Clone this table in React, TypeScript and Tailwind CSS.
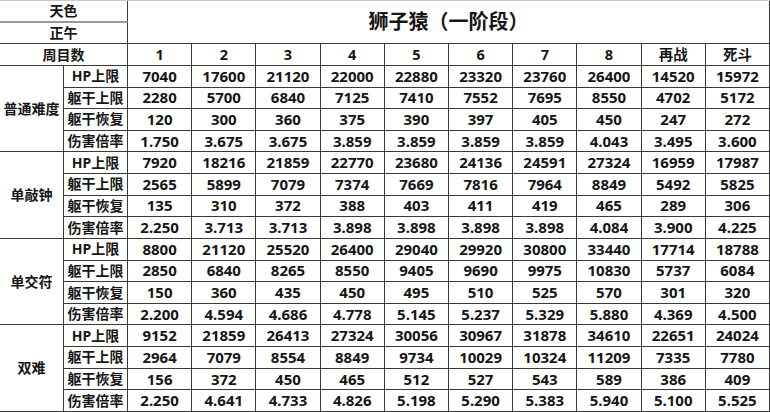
import React from "react";

const cols = ["1", "2", "3", "4", "5", "6", "7", "8", "再战", "死斗"];

const groups = [
  {
    name: "普通难度",
    rows: [
      ["HP上限", "7040", "17600", "21120", "22000", "22880", "23320", "23760", "26400", "14520", "15972"],
      ["躯干上限", "2280", "5700", "6840", "7125", "7410", "7552", "7695", "8550", "4702", "5172"],
      ["躯干恢复", "120", "300", "360", "375", "390", "397", "405", "450", "247", "272"],
      ["伤害倍率", "1.750", "3.675", "3.675", "3.859", "3.859", "3.859", "3.859", "4.043", "3.495", "3.600"],
    ],
  },
  {
    name: "单敲钟",
    rows: [
      ["HP上限", "7920", "18216", "21859", "22770", "23680", "24136", "24591", "27324", "16959", "17987"],
      ["躯干上限", "2565", "5899", "7079", "7374", "7669", "7816", "7964", "8849", "5492", "5825"],
      ["躯干恢复", "135", "310", "372", "388", "403", "411", "419", "465", "289", "306"],
      ["伤害倍率", "2.250", "3.713", "3.713", "3.898", "3.898", "3.898", "3.898", "4.084", "3.900", "4.225"],
    ],
  },
  {
    name: "单交符",
    rows: [
      ["HP上限", "8800", "21120", "25520", "26400", "29040", "29920", "30800", "33440", "17714", "18788"],
      ["躯干上限", "2850", "6840", "8265", "8550", "9405", "9690", "9975", "10830", "5737", "6084"],
      ["躯干恢复", "150", "360", "435", "450", "495", "510", "525", "570", "301", "320"],
      ["伤害倍率", "2.200", "4.594", "4.686", "4.778", "5.145", "5.237", "5.329", "5.880", "4.369", "4.500"],
    ],
  },
  {
    name: "双难",
    rows: [
      ["HP上限", "9152", "21859", "26413", "27324", "30056", "30967", "31878", "34610", "22651", "24024"],
      ["躯干上限", "2964", "7079", "8554", "8849", "9734", "10029", "10324", "11209", "7335", "7780"],
      ["躯干恢复", "156", "372", "450", "465", "512", "527", "543", "589", "386", "409"],
      ["伤害倍率", "2.250", "4.641", "4.733", "4.826", "5.198", "5.290", "5.383", "5.940", "5.100", "5.525"],
    ],
  },
];

const cell = "flex items-center justify-center border-r border-b border-[#3a3a3a] leading-none";

export default function App() {
  return (
    <div
      className="w-[770px] h-[412px] bg-white text-[#161616] font-bold overflow-hidden"
      style={{ fontFamily: '"Noto Sans", "Noto Sans CJK SC", sans-serif' }}
    >
      <div className="grid h-full grid-cols-[64px_64px_repeat(10,minmax(0,1fr))] grid-rows-[repeat(19,minmax(0,1fr))] border-t border-[#c8c8c8]">
        <div className={`${cell} col-span-2 text-[14px] border-b-2 border-b-[#9a9a9a]`}>天色</div>
        <div className={`${cell} col-span-10 row-span-2 text-[20px]`}>狮子猿（一阶段）</div>
        <div className={`${cell} col-span-2 text-[14px]`}>正午</div>

        <div className={`${cell} col-span-2 text-[14px]`}>周目数</div>
        {cols.map((c) => (
          <div key={c} className={`${cell} text-[14.5px]`}>
            {c}
          </div>
        ))}

        {groups.map((g) => (
          <React.Fragment key={g.name}>
            <div className={`${cell} row-span-4 text-[14px]`}>{g.name}</div>
            {g.rows.map((r) =>
              r.map((v, i) => (
                <div
                  key={g.name + r[0] + i}
                  className={`${cell} ${i === 0 ? "text-[14px]" : "text-[15px]"}`}
                >
                  {v}
                </div>
              ))
            )}
          </React.Fragment>
        ))}
      </div>
    </div>
  );
}
